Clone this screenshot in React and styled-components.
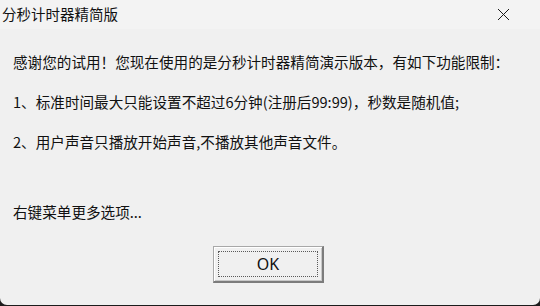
import React from "react";
import styled, { createGlobalStyle } from "styled-components";

const GlobalStyle = createGlobalStyle`
    html, body {
        margin: 0;
        padding: 0;
        background: #1c1c1c;
    }
    #root {
        width: 540px;
        height: 306px;
    }
`;

const Window = styled.div`
    width: 540px;
    height: 305px;
    display: flex;
    flex-direction: column;
    background: #f0f0f0;
    border-radius: 0 0 7px 7px;
    overflow: hidden;
    font-family: "Noto Sans CJK SC", "Noto Sans", sans-serif;
    color: #111;
`;

const TitleBar = styled.div`
    height: 29px;
    display: flex;
    align-items: center;
    justify-content: space-between;
    padding: 0 0 1px 2px;
    box-sizing: border-box;
    background: #f3f3f3;
`;

const Title = styled.span`
    font-size: 14.5px;
    line-height: 20px;
    color: #111;
`;

const CloseButton = styled.button`
    width: 46px;
    height: 29px;
    margin-right: 14px;
    border: none;
    background: transparent;
    display: flex;
    align-items: center;
    justify-content: center;
    padding: 0;
`;

const Content = styled.div`
    flex: 1;
    display: flex;
    flex-direction: column;
    padding: 23px 13px 0 13px;
`;

const Message = styled.p`
    margin: ${(p) => p.$space || 0}px 0 0 0;
    font-size: 14.6px;
    line-height: 20px;
    white-space: nowrap;
`;

const ButtonRow = styled.div`
    display: flex;
    justify-content: center;
    margin-top: 24px;
    padding-right: 3px;
`;

const OkButton = styled.button`
    width: 111px;
    height: 37px;
    padding: 4px;
    display: flex;
    box-sizing: border-box;
    background: #f0f0f0;
    border: 1px solid #a8a8a8;
    border-right: 2px solid #7c7c7c;
    border-bottom: 2px solid #7c7c7c;
    box-shadow: inset 1px 1px 0 #ffffff, inset -1px -1px 0 #c8c8c8;
    font-family: "Noto Sans", "Liberation Sans", sans-serif;
    font-size: 16px;
    color: #111;
`;

const FocusRing = styled.span`
    flex: 1;
    display: flex;
    align-items: center;
    justify-content: center;
    border: 1px dotted #5a5a5a;
`;

function CloseIcon() {
    return (
        <svg width="13" height="13" viewBox="0 0 13 13">
            <path d="M1 1 L12 12 M12 1 L1 12" stroke="#1a1a1a" strokeWidth="1" fill="none" />
        </svg>
    );
}

export default function App() {
    return (
        <>
            <GlobalStyle />
            <Window>
                <TitleBar>
                    <Title>分秒计时器精简版</Title>
                    <CloseButton aria-label="关闭">
                        <CloseIcon />
                    </CloseButton>
                </TitleBar>
                <Content>
                    <Message>感谢您的试用！您现在使用的是分秒计时器精简演示版本，有如下功能限制：</Message>
                    <Message $space={20}>1、标准时间最大只能设置不超过6分钟(注册后99:99)，秒数是随机值;</Message>
                    <Message $space={20}>2、用户声音只播放开始声音,不播放其他声音文件。</Message>
                    <Message $space={50}>右键菜单更多选项...</Message>
                    <ButtonRow>
                        <OkButton>
                            <FocusRing>OK</FocusRing>
                        </OkButton>
                    </ButtonRow>
                </Content>
            </Window>
        </>
    );
}
